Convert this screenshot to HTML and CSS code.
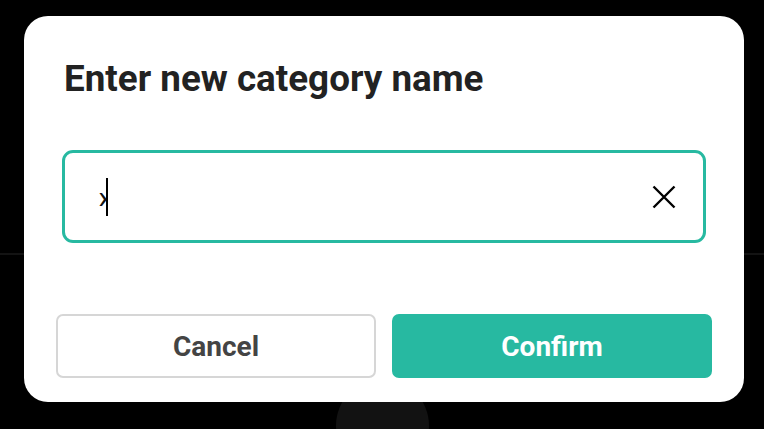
FILE: index.html
```html
<!DOCTYPE html>
<html>
<head>
<meta charset="utf-8">
<link rel="stylesheet" href="styles.css">
</head>
<body>
<div class="backdrop">
  <div class="divider"></div>
  <div class="fab"></div>
</div>
<div class="dialog">
  <h1 class="title">Enter new category name</h1>
  <div class="field">
    <span class="value">›</span>
    <span class="caret"></span>
    <span class="spacer"></span>
    <svg class="clear" width="24" height="24" viewBox="0 0 24 24">
      <path d="M1.5 1.5 L22.5 22.5 M22.5 1.5 L1.5 22.5" stroke="#000" stroke-width="2.4" fill="none"/>
    </svg>
  </div>
  <div class="actions">
    <button class="btn btn-cancel">Cancel</button>
    <button class="btn btn-confirm">Confirm</button>
  </div>
</div>
</body>
</html>
```

FILE: styles.css
```css
* { box-sizing: border-box; }
html, body {
  margin: 0;
  padding: 0;
  width: 764px;
  height: 429px;
  overflow: hidden;
  background: #000;
  font-family: Roboto, "Liberation Sans", sans-serif;
}
.backdrop {
  width: 764px;
  height: 429px;
  overflow: hidden;
  display: flex;
  flex-direction: column;
  align-items: center;
  padding-top: 253px;
}
.divider {
  align-self: stretch;
  height: 2px;
  flex-shrink: 0;
  background: #131313;
}
.fab {
  margin-top: 124px;
  width: 93px;
  height: 93px;
  border-radius: 50%;
  background: #121212;
  flex-shrink: 0;
}
.dialog {
  position: absolute;
  left: 24px;
  top: 16px;
  width: 720px;
  height: 386px;
  background: #fff;
  border-radius: 24px;
  padding: 41px 32px 24px;
  display: flex;
  flex-direction: column;
}
.title {
  margin: 0 0 0 8px;
  font-size: 36.8px;
  line-height: 43px;
  font-weight: 700;
  color: #222;
}
.field {
  margin: 50px 6px 0;
  height: 93px;
  border: 3px solid #27b9a1;
  border-radius: 11px;
  display: flex;
  align-items: center;
  padding: 0 27px 0 33px;
}
.value {
  font-size: 34px;
  line-height: 38px;
  color: #111;
  margin-right: -2px;
}
.caret {
  width: 2px;
  height: 38px;
  background: #000;
}
.spacer { flex: 1; }
.clear { display: block; }
.actions {
  margin-top: auto;
  display: flex;
  gap: 16px;
}
.btn {
  flex: 1 1 0;
  min-width: 0;
  height: 64px;
  padding: 0;
  border-radius: 7px;
  border: 2px solid transparent;
  font-family: Roboto, "Liberation Sans", sans-serif;
  font-size: 28px;
  font-weight: 700;
  cursor: pointer;
}
.btn-cancel {
  background: #fff;
  border-color: #d6d6d6;
  color: #444;
}
.btn-confirm {
  background: #27b9a1;
  border-color: #27b9a1;
  color: #fff;
}
```
